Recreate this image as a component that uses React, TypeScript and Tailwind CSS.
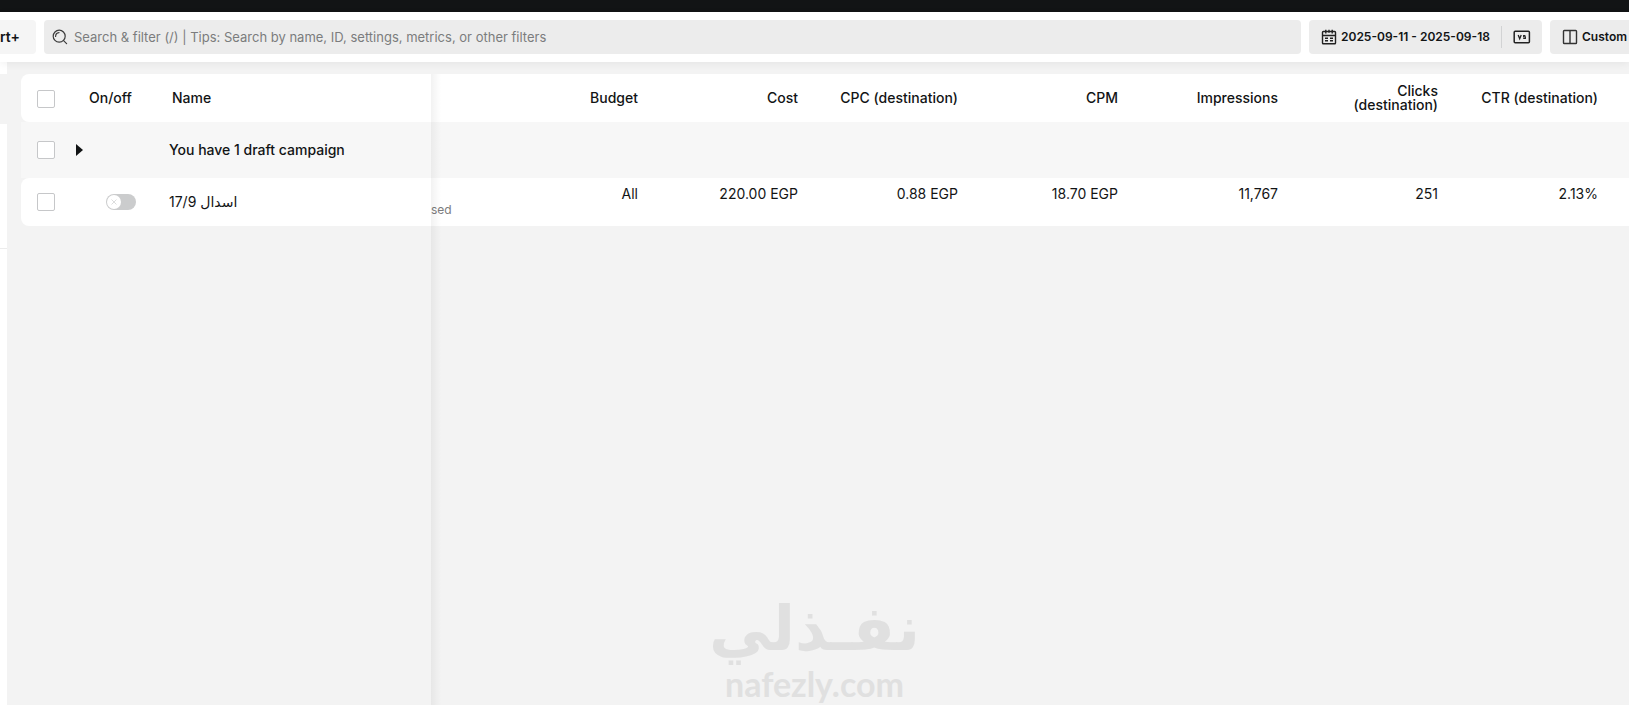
import type { ReactNode } from "react";

const METRICS = [
  { label: "Budget", value: "All" },
  { label: "Cost", value: "220.00 EGP" },
  { label: "CPC (destination)", value: "0.88 EGP" },
  { label: "CPM", value: "18.70 EGP" },
  { label: "Impressions", value: "11,767" },
  { label: "Clicks (destination)", value: "251" },
  { label: "CTR (destination)", value: "2.13%" },
];

function SearchIcon() {
  return (
    <svg width="16" height="16" viewBox="0 0 16 16" fill="none" stroke="#3c3c3c" strokeWidth="1.2" strokeLinecap="round">
      <circle cx="7.2" cy="7.2" r="6" />
      <path d="M11.6 11.6 14.6 14.6" />
      <path d="M3.6 7.4a3.8 3.8 0 0 1 3.4-3.8" />
    </svg>
  );
}

function CalendarIcon() {
  return (
    <svg width="16" height="16" viewBox="0 0 16 16" fill="none" stroke="#222" strokeWidth="1.4">
      <rect x="1.5" y="2.5" width="13" height="12.2" rx="0.8" />
      <path d="M1.5 6.5h13M4.8.8v3.6M11.2.8v3.6M8 .8v3" />
      <path d="M4 9.2h3M9 9.2h3M4 11.8h3M9 11.8h3" />
    </svg>
  );
}

function CompareIcon() {
  return (
    <svg width="18" height="14" viewBox="0 0 18 14" fill="none" stroke="#222" strokeWidth="1.5">
      <rect x="1.2" y="1.2" width="15.2" height="11.6" rx="1" />
      <path d="m5.2 5 1.5 3.8L8.2 5" strokeWidth="1.3" />
      <path d="M12.4 5.5h-1.8v1.4h1.8v1.6h-2.2" strokeWidth="1.1" />
    </svg>
  );
}

function ColumnsIcon() {
  return (
    <svg width="16" height="16" viewBox="0 0 16 16" fill="none" stroke="#333" strokeWidth="1.4">
      <rect x="1.5" y="1.5" width="13" height="13" rx="0.8" />
      <path d="M8 1.5v13" />
    </svg>
  );
}

function Checkbox({ label }: { label: string }) {
  return (
    <input
      type="checkbox"
      aria-label={label}
      className="block size-[18px] appearance-none rounded-xs border border-[#c6c7c9] bg-white checked:bg-[#121415]"
    />
  );
}

function Toggle({ label }: { label: string }) {
  return (
    <button
      type="button"
      role="switch"
      aria-checked="false"
      aria-label={label}
      className="flex h-4 w-[30px] items-center rounded-full bg-[#cbcccd] p-px"
    >
      <span className="flex size-3.5 items-center justify-center rounded-full bg-white">
        <svg width="6" height="6" viewBox="0 0 6 6" stroke="#dcdddd" strokeWidth="1">
          <path d="M.5.5l5 5M5.5.5l-5 5" />
        </svg>
      </span>
    </button>
  );
}

function ToolButton({ children, className = "" }: { children: ReactNode; className?: string }) {
  return (
    <button type="button" className={`flex items-center whitespace-nowrap text-xs font-semibold ${className}`}>
      {children}
    </button>
  );
}

function Toolbar() {
  return (
    <div className="relative z-20 flex h-[50px] items-center gap-2 bg-white shadow-[0_2px_8px_rgba(0,0,0,0.06)]">
      <button type="button" className="h-[34px] w-9 shrink-0 rounded-r-sm bg-[#f5f5f5] text-left text-sm font-semibold">
        rt+
      </button>
      <label className="flex h-[34px] min-w-0 flex-1 items-center gap-1.5 rounded-sm bg-[#ececec] px-2">
        <SearchIcon />
        <input
          type="text"
          aria-label="Search and filter"
          placeholder="Search & filter (/) | Tips: Search by name, ID, settings, metrics, or other filters"
          className="min-w-0 flex-1 bg-transparent pt-0.5 text-[13px] outline-none placeholder:text-[#7b7c7d]"
        />
      </label>
      <div className="flex h-[34px] w-[233px] shrink-0 items-center rounded-sm bg-[#ececec]">
        <ToolButton className="flex-1 gap-1 pl-3">
          <CalendarIcon />
          2025-09-11 - 2025-09-18
        </ToolButton>
        <span className="h-[22px] w-px bg-[#d2d3d4]" />
        <button type="button" aria-label="Compare" className="flex h-full w-10 items-center justify-center">
          <CompareIcon />
        </button>
      </div>
      <ToolButton className="h-[34px] w-[79px] shrink-0 gap-1 rounded-l-sm bg-[#ececec] pl-3">
        <ColumnsIcon />
        Custom
      </ToolButton>
    </div>
  );
}

function CampaignTable() {
  return (
    <table className="w-full table-fixed border-separate border-spacing-0 text-sm">
      <colgroup>
        <col className="w-12" />
        <col className="w-8" />
        <col className="w-[68px]" />
        <col className="w-[262px]" />
        <col className="w-[63px]" />
        {METRICS.map((m) => (
          <col key={m.label} className="w-40" />
        ))}
        <col />
      </colgroup>
      <thead>
        <tr className="h-12">
          <th className="rounded-l-lg bg-white pt-0.5 pl-4">
            <Checkbox label="Select all" />
          </th>
          <th className="bg-white" />
          <th className="bg-white text-left font-medium whitespace-nowrap">
            <span className="-ml-3">On/off</span>
          </th>
          <th className="bg-white pl-[3px] text-left font-medium">Name</th>
          <th className="bg-white" />
          {METRICS.map((m) => (
            <th key={m.label} className="bg-white px-4 text-right leading-[14px] font-medium">
              {m.label}
            </th>
          ))}
          <th className="bg-white" />
        </tr>
      </thead>
      <tbody>
        <tr className="h-14 bg-[#f7f7f7]">
          <td className="pl-4">
            <Checkbox label="Select draft campaign" />
          </td>
          <td className="pl-1.5">
            <button type="button" aria-label="Expand drafts" className="block">
              <svg width="8" height="12" viewBox="0 0 8 12" fill="#121415">
                <path d="M1 0v12L8 6z" />
              </svg>
            </button>
          </td>
          <td />
          <td className="font-medium">You have 1 draft campaign</td>
          <td colSpan={METRICS.length + 2} />
        </tr>
        <tr className="h-12">
          <td className="rounded-l-lg bg-white pl-4">
            <Checkbox label="Select campaign" />
          </td>
          <td className="bg-white" />
          <td className="bg-white pl-[5px]">
            <Toggle label="Campaign on/off" />
          </td>
          <td className="bg-white">اسدال 17/9</td>
          <td className="bg-white pt-4 text-xs text-[#7b7c7d]">sed</td>
          {METRICS.map((m) => (
            <td key={m.label} className="bg-white px-4 pt-1.5 text-right align-top">
              {m.value}
            </td>
          ))}
          <td className="bg-white" />
        </tr>
      </tbody>
    </table>
  );
}

function Watermark() {
  return (
    <div className="pointer-events-none absolute bottom-0 left-1/2 flex -translate-x-1/2 flex-col items-center text-[#e0e0e0]">
      <span className="font-['DejaVu_Sans',sans-serif] text-[62px] leading-[68px] font-bold">نفـذلي</span>
      <span className="font-['Lato',sans-serif] text-[34px] leading-[42px] font-bold">nafezly.com</span>
    </div>
  );
}

export default function App() {
  return (
    <div className="relative flex min-h-screen flex-col overflow-hidden bg-[#f3f3f3] font-['Inter','DejaVu_Sans',sans-serif] text-[#121415]">
      <div className="h-3 bg-[#121415]" />
      <Toolbar />
      <div className="flex flex-1">
        {/* Edge of the side navigation */}
        <nav className="flex w-[7px] shrink-0 flex-col bg-white">
          <div className="mt-3 h-[50px] bg-[#f3f3f3]" />
          <div className="h-[125px] border-b border-[#ececec]" />
        </nav>
        <main className="relative min-w-0 flex-1 pt-3 pl-3.5">
          <CampaignTable />
          {/* Shadow cast by the pinned columns */}
          <div className="pointer-events-none absolute top-3 bottom-0 left-[424px] w-2.5 bg-linear-to-r from-black/5 to-transparent" />
        </main>
      </div>
      <Watermark />
    </div>
  );
}
